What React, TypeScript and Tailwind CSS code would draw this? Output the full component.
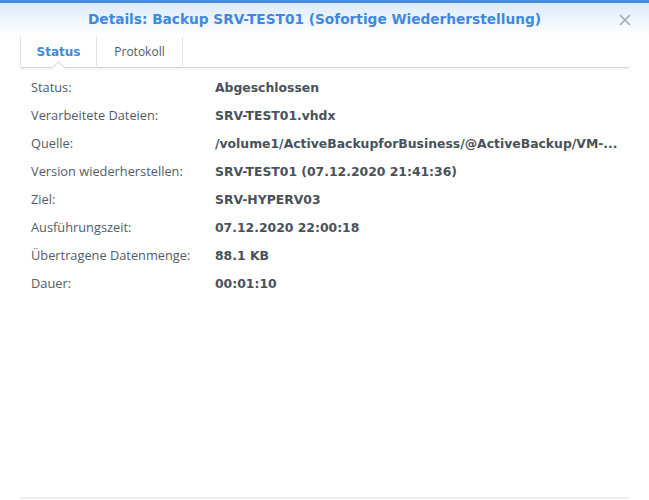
import React from "react";

const rows: [string, string][] = [
  ["Status:", "Abgeschlossen"],
  ["Verarbeitete Dateien:", "SRV-TEST01.vhdx"],
  ["Quelle:", "/volume1/ActiveBackupforBusiness/@ActiveBackup/VM-..."],
  ["Version wiederherstellen:", "SRV-TEST01 (07.12.2020 21:41:36)"],
  ["Ziel:", "SRV-HYPERV03"],
  ["Ausführungszeit:", "07.12.2020 22:00:18"],
  ["Übertragene Datenmenge:", "88.1 KB"],
  ["Dauer:", "00:01:10"],
];

export default function App() {
  return (
    <div
      className="w-[649px] h-[500px] bg-white flex flex-col overflow-hidden"
      style={{ fontFamily: '"DejaVu Sans", Verdana, sans-serif' }}
    >
      <div className="h-[3px] bg-[#4a8ae0]" />
      <div className="relative h-[33px] flex items-center justify-center pr-[20px] bg-gradient-to-b from-[#dcebfa] to-white">
        <span className="text-[13.7px] font-bold text-[#3f88de]">
          Details: Backup SRV-TEST01 (Sofortige Wiederherstellung)
        </span>
        <svg
          className="absolute right-[18px] top-[11px]"
          width="12"
          height="12"
          viewBox="0 0 12 12"
        >
          <path d="M1 1 L11 11 M11 1 L1 11" stroke="#a3abb4" strokeWidth="1.6" />
        </svg>
      </div>
      <div className="mx-[20px] relative h-[32px] flex items-stretch border-b border-[#d3d8de]">
        <div className="w-px bg-[#dde3e9] my-[1px]" />
        <div className="w-[75px] flex items-center justify-center text-[12px] font-bold text-[#3f88de] relative">
          Status
          <div className="absolute bottom-[-5px] left-[33px] w-[9px] h-[9px] rotate-45 bg-white border-l border-t border-[#d3d8de]" />
        </div>
        <div className="w-px bg-[#dde3e9] my-[1px]" />
        <div
          className="w-[85px] flex items-center justify-center text-[12px] text-[#505a64]"
          style={{ fontFamily: '"Open Sans", sans-serif' }}
        >
          Protokoll
        </div>
        <div className="w-px bg-[#dde3e9] my-[1px]" />
      </div>
      <div className="mx-[20px] h-[3px] bg-gradient-to-b from-[#eef0f2] to-white" />
      <div className="flex flex-col pt-[3px] pl-[31px]">
        {rows.map(([k, v]) => (
          <div key={k} className="h-[28px] flex items-center">
            <div
              className="w-[184px] text-[12.8px] text-[#525c66]"
              style={{ fontFamily: '"Open Sans", sans-serif' }}
            >
              {k}
            </div>
            <div className="text-[12.4px] font-bold text-[#48515b] whitespace-nowrap">{v}</div>
          </div>
        ))}
      </div>
      <div className="flex-1" />
      <div className="mx-[20px] h-[2px] bg-[#eeeeee] mb-[1px]" />
    </div>
  );
}
